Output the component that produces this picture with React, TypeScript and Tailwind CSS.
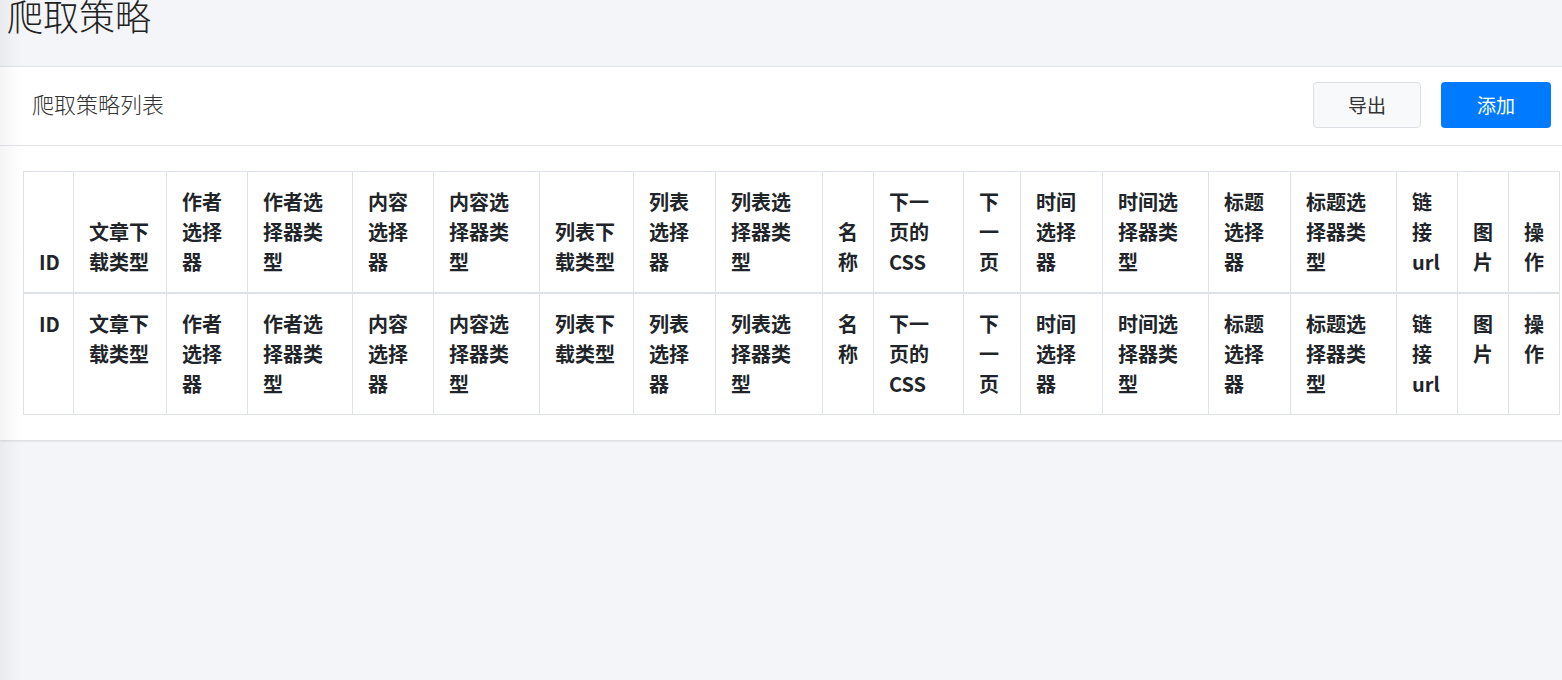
import React from "react";

const columns: { label: string; width: number }[] = [
  { label: "ID", width: 50 },
  { label: "文章下载类型", width: 93 },
  { label: "作者选择器", width: 81 },
  { label: "作者选择器类型", width: 105 },
  { label: "内容选择器", width: 81 },
  { label: "内容选择器类型", width: 106 },
  { label: "列表下载类型", width: 94 },
  { label: "列表选择器", width: 82 },
  { label: "列表选择器类型", width: 107 },
  { label: "名称", width: 51 },
  { label: "下一页的CSS", width: 90 },
  { label: "下一页", width: 57 },
  { label: "时间选择器", width: 82 },
  { label: "时间选择器类型", width: 106 },
  { label: "标题选择器", width: 82 },
  { label: "标题选择器类型", width: 106 },
  { label: "链接url", width: 61 },
  { label: "图片", width: 51 },
  { label: "操作", width: 51 },
];

const font = { fontFamily: '"Noto Sans CJK SC", "Noto Sans", sans-serif' };

export default function App() {
  return (
    <div
      className="relative h-[680px] w-full overflow-hidden bg-[#f4f5f8] text-[#212529]"
      style={font}
    >
      <div className="w-[1583px]">
        <h1 className="-mt-[10px] h-[76px] pl-[7px] text-[36px] font-light leading-[50px] text-[#222]">
          爬取策略
        </h1>

        <div className="border-t border-[#e3e5ea] bg-white shadow-[0_1px_2px_rgba(0,0,0,0.12)]">
          <div className="flex items-center justify-between border-b border-[#e3e5ea] py-[15px] pb-[17px] pl-[32px] pr-[32px]">
            <h2 className="pb-[3px] text-[22px] font-light text-[#333]">爬取策略列表</h2>
            <div className="flex gap-[20px]">
              <button className="h-[46px] w-[108px] rounded-[4px] border border-[#dcdfe3] bg-[#f8f9fa] text-[19px] text-[#333]">
                导出
              </button>
              <button className="h-[46px] w-[110px] rounded-[4px] bg-[#007bff] text-[19px] text-white">
                添加
              </button>
            </div>
          </div>

          <div className="px-[23px] pb-[25px] pt-[25px]">
            <table className="w-[1536px] table-fixed border-collapse text-[20px] font-bold leading-[30px]">
              <colgroup>
                {columns.map((c) => (
                  <col key={c.label} style={{ width: c.width }} />
                ))}
              </colgroup>
              <thead>
                <tr>
                  {columns.map((c) => (
                    <th
                      key={c.label}
                      className="border border-b-2 border-[#dee2e6] p-[15px] text-left align-bottom font-bold"
                    >
                      {c.label}
                    </th>
                  ))}
                </tr>
              </thead>
              <tfoot>
                <tr>
                  {columns.map((c) => (
                    <th
                      key={c.label}
                      className="border border-[#dee2e6] p-[15px] text-left align-top font-bold"
                    >
                      {c.label}
                    </th>
                  ))}
                </tr>
              </tfoot>
            </table>
          </div>
        </div>
      </div>

      <div className="pointer-events-none absolute inset-y-0 left-0 w-[22px] bg-gradient-to-r from-black/[0.04] to-transparent" />
    </div>
  );
}
